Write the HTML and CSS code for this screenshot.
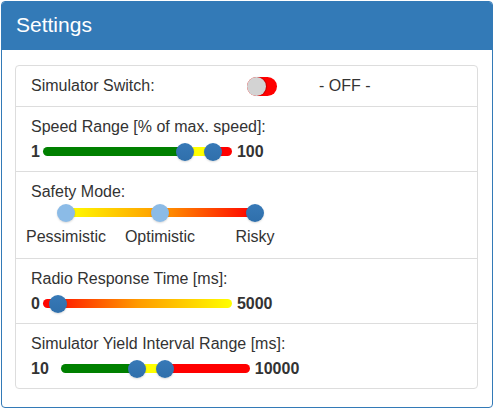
FILE: index.html
```html
<!DOCTYPE html>
<html>
<head>
<meta charset="utf-8">
<link rel="stylesheet" href="styles.css">
</head>
<body>
<div class="panel">
  <div class="panel-heading">Settings</div>
  <div class="panel-body">
    <div class="list">
      <div class="item row-switch">
        <span class="switch-label">Simulator Switch:</span>
        <span class="toggle"><span class="knob"></span></span>
        <span class="state">- OFF -</span>
      </div>
      <div class="item">
        <div class="label">Speed Range [% of max. speed]:</div>
        <div class="slider-row">
          <b class="num">1</b>
          <div class="slider gap-s">
            <div class="track" style="background: linear-gradient(to right, #008000 0, #008000 142px, #ffff00 142px, #ffff00 170px, #ff0000 170px)"></div>
            <span class="handle" style="left: 142px"></span>
            <span class="handle" style="left: 170px"></span>
          </div>
          <b class="num">100</b>
        </div>
      </div>
      <div class="item">
        <div class="label">Safety Mode:</div>
        <div class="safety">
          <div class="slider safety-slider">
            <div class="track grad-yr"></div>
            <span class="handle light" style="left: 0px"></span>
            <span class="handle light" style="left: 94px"></span>
            <span class="handle" style="left: 189px"></span>
          </div>
          <div class="ticks">
            <span class="tick" style="left: 35px">Pessimistic</span>
            <span class="tick" style="left: 129px">Optimistic</span>
            <span class="tick" style="left: 224px">Risky</span>
          </div>
        </div>
      </div>
      <div class="item">
        <div class="label">Radio Response Time [ms]:</div>
        <div class="slider-row">
          <b class="num">0</b>
          <div class="slider gap-s">
            <div class="track grad-ry"></div>
            <span class="handle" style="left: 15px"></span>
          </div>
          <b class="num">5000</b>
        </div>
      </div>
      <div class="item">
        <div class="label">Simulator Yield Interval Range [ms]:</div>
        <div class="slider-row">
          <b class="num">10</b>
          <div class="slider gap-l">
            <div class="track" style="background: linear-gradient(to right, #008000 0, #008000 76px, #ffff00 76px, #ffff00 104px, #ff0000 104px)"></div>
            <span class="handle" style="left: 76px"></span>
            <span class="handle" style="left: 104px"></span>
          </div>
          <b class="num">10000</b>
        </div>
      </div>
    </div>
  </div>
</div>
</body>
</html>
```

FILE: styles.css
```css
html, body {
  margin: 0;
  padding: 0;
  background: #fff;
}
body {
  font-family: "Liberation Sans", Arial, sans-serif;
  font-size: 16px;
  color: #333;
}
.panel {
  box-sizing: border-box;
  width: 492px;
  height: 407px;
  margin: 1px 0 0 1px;
  border: 1px solid #337ab7;
  border-radius: 4px;
  overflow: hidden;
}
.panel-heading {
  height: 49px;
  background: #337ab7;
  color: #fff;
  font-size: 21px;
  line-height: 47px;
  padding-left: 14px;
  margin-top: -1px;
}
.panel-body {
  padding: 15px 14px 0 13px;
}
.list {
  border: 1px solid #ddd;
  border-radius: 4px;
}
.item {
  padding: 10px 15px;
  line-height: 20px;
}
.item + .item {
  border-top: 1px solid #ddd;
}
.row-switch {
  display: flex;
  align-items: center;
}
.switch-label {
  width: 216px;
}
.toggle {
  position: relative;
  width: 30px;
  height: 19px;
  border-radius: 10px;
  background: #ff0000;
}
.knob {
  position: absolute;
  left: 0;
  top: 0;
  width: 19px;
  height: 19px;
  border-radius: 50%;
  background: #d3d3d3;
  box-shadow: 1px 0 1px rgba(0,0,0,0.25);
}
.state {
  margin-left: 42px;
}
.slider-row {
  display: flex;
  align-items: center;
  height: 18px;
  margin-top: 6px;
}
.num {
  font-weight: bold;
  line-height: 18px;
}
.slider {
  position: relative;
  width: 189px;
  height: 18px;
}
.gap-s {
  margin: 0 5px 0 3px;
}
.gap-l {
  margin: 0 5px 0 12px;
}
.track {
  position: absolute;
  left: 0;
  right: 0;
  top: 4px;
  height: 9px;
  border-radius: 5px;
}
.grad-yr {
  background: linear-gradient(to right, #ffff00, #ff9a00 50%, #ff0000);
}
.grad-ry {
  background: linear-gradient(to right, #ff0000, #ff9a00 50%, #ffff00);
}
.handle {
  position: absolute;
  top: 0;
  width: 18px;
  height: 18px;
  margin-left: -9px;
  border-radius: 50%;
  background: linear-gradient(#3779b7, #2f6fab);
  box-shadow: 0 1px 2px rgba(0,0,0,0.15);
}
.handle.light {
  background: #8bbbe7;
}
.safety {
  margin-top: 2px;
  padding-bottom: 1px;
}
.safety-slider {
  margin-left: 35px;
}
.ticks {
  position: relative;
  height: 20px;
  margin-top: 5px;
}
.tick {
  position: absolute;
  top: 0;
  transform: translateX(-50%);
  white-space: nowrap;
}
```
